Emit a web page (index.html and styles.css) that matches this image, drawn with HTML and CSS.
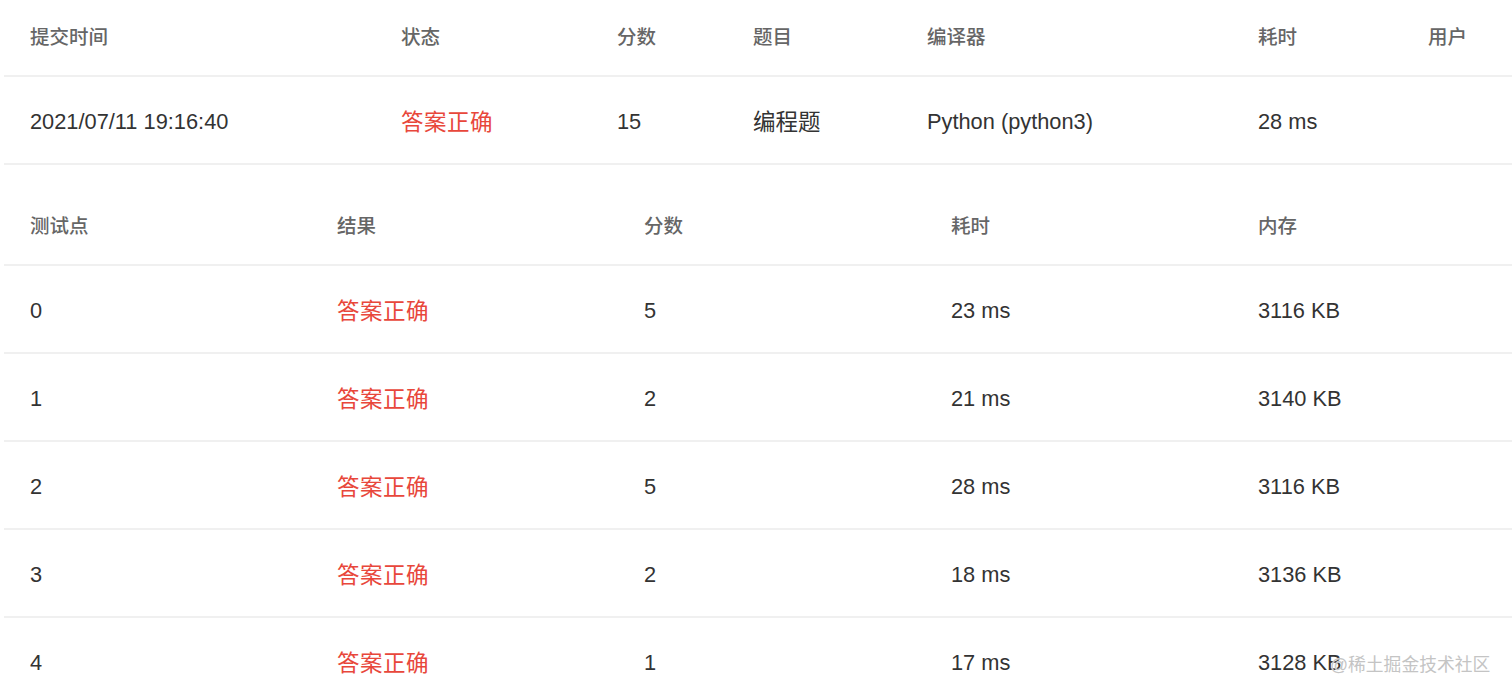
FILE: index.html
```html
<!DOCTYPE html>
<html lang="zh-CN">
<head>
<meta charset="utf-8">
<title>提交详情</title>
<link rel="stylesheet" href="styles.css">
</head>
<body>
<div class="page">
  <div class="table t-submit">
    <div class="row head">
      <div class="cell">提交时间</div>
      <div class="cell">状态</div>
      <div class="cell">分数</div>
      <div class="cell">题目</div>
      <div class="cell">编译器</div>
      <div class="cell">耗时</div>
      <div class="cell">用户</div>
    </div>
    <div class="row body">
      <div class="cell">2021/07/11 19:16:40</div>
      <div class="cell ok">答案正确</div>
      <div class="cell">15</div>
      <div class="cell cjk">编程题</div>
      <div class="cell">Python (python3)</div>
      <div class="cell">28 ms</div>
      <div class="cell"></div>
    </div>
  </div>

  <div class="table t-cases">
    <div class="row head">
      <div class="cell">测试点</div>
      <div class="cell">结果</div>
      <div class="cell">分数</div>
      <div class="cell">耗时</div>
      <div class="cell">内存</div>
    </div>
    <div class="row body">
      <div class="cell">0</div><div class="cell ok">答案正确</div><div class="cell">5</div><div class="cell">23 ms</div><div class="cell">3116 KB</div>
    </div>
    <div class="row body">
      <div class="cell">1</div><div class="cell ok">答案正确</div><div class="cell">2</div><div class="cell">21 ms</div><div class="cell">3140 KB</div>
    </div>
    <div class="row body">
      <div class="cell">2</div><div class="cell ok">答案正确</div><div class="cell">5</div><div class="cell">28 ms</div><div class="cell">3116 KB</div>
    </div>
    <div class="row body">
      <div class="cell">3</div><div class="cell ok">答案正确</div><div class="cell">2</div><div class="cell">18 ms</div><div class="cell">3136 KB</div>
    </div>
    <div class="row body">
      <div class="cell">4</div><div class="cell ok">答案正确</div><div class="cell">1</div><div class="cell">17 ms</div><div class="cell">3128 KB</div>
    </div>
  </div>
</div>
<div class="watermark">@稀土掘金技术社区</div>
</body>
</html>
```

FILE: styles.css
```css
html, body {
  margin: 0;
  padding: 0;
  background: #ffffff;
  overflow: hidden;
}
body {
  width: 1512px;
  height: 697px;
  position: relative;
  font-family: "Liberation Sans", "Noto Sans CJK SC", sans-serif;
}
.page {
  padding-left: 4px;
  margin-top: -5px;
  width: 1560px;
}
.table {
  display: flex;
  flex-direction: column;
}
.t-cases {
  margin-top: 19px;
}
.row {
  display: grid;
  align-items: center;
  border-bottom: 2px solid #f0f0f0;
}
.t-submit .row {
  grid-template-columns: 371px 216px 136px 174px 331px 170px 110px;
}
.t-cases .row {
  grid-template-columns: 307px 307px 307px 307px 307px;
}
.row.head {
  height: 80px;
}
.row.body {
  height: 86px;
}
.cell {
  padding-left: 26px;
  white-space: nowrap;
}
.head .cell {
  font-size: 19.5px;
  color: #666666;
  font-weight: 500;
}
.body .cell {
  font-size: 21.8px;
  line-height: 26px;
  padding-top: 4px;
  color: #333333;
}
.body .cell.ok,
.body .cell.cjk {
  font-size: 22.5px;
  padding-top: 6px;
}
.body .cell.ok {
  color: #e8473b;
  letter-spacing: 0.5px;
}
.watermark {
  position: absolute;
  left: 1330px;
  top: 650px;
  font-size: 17.8px;
  color: #c4c4c4;
  text-shadow: 0 0 1px #ffffff;
}
```
